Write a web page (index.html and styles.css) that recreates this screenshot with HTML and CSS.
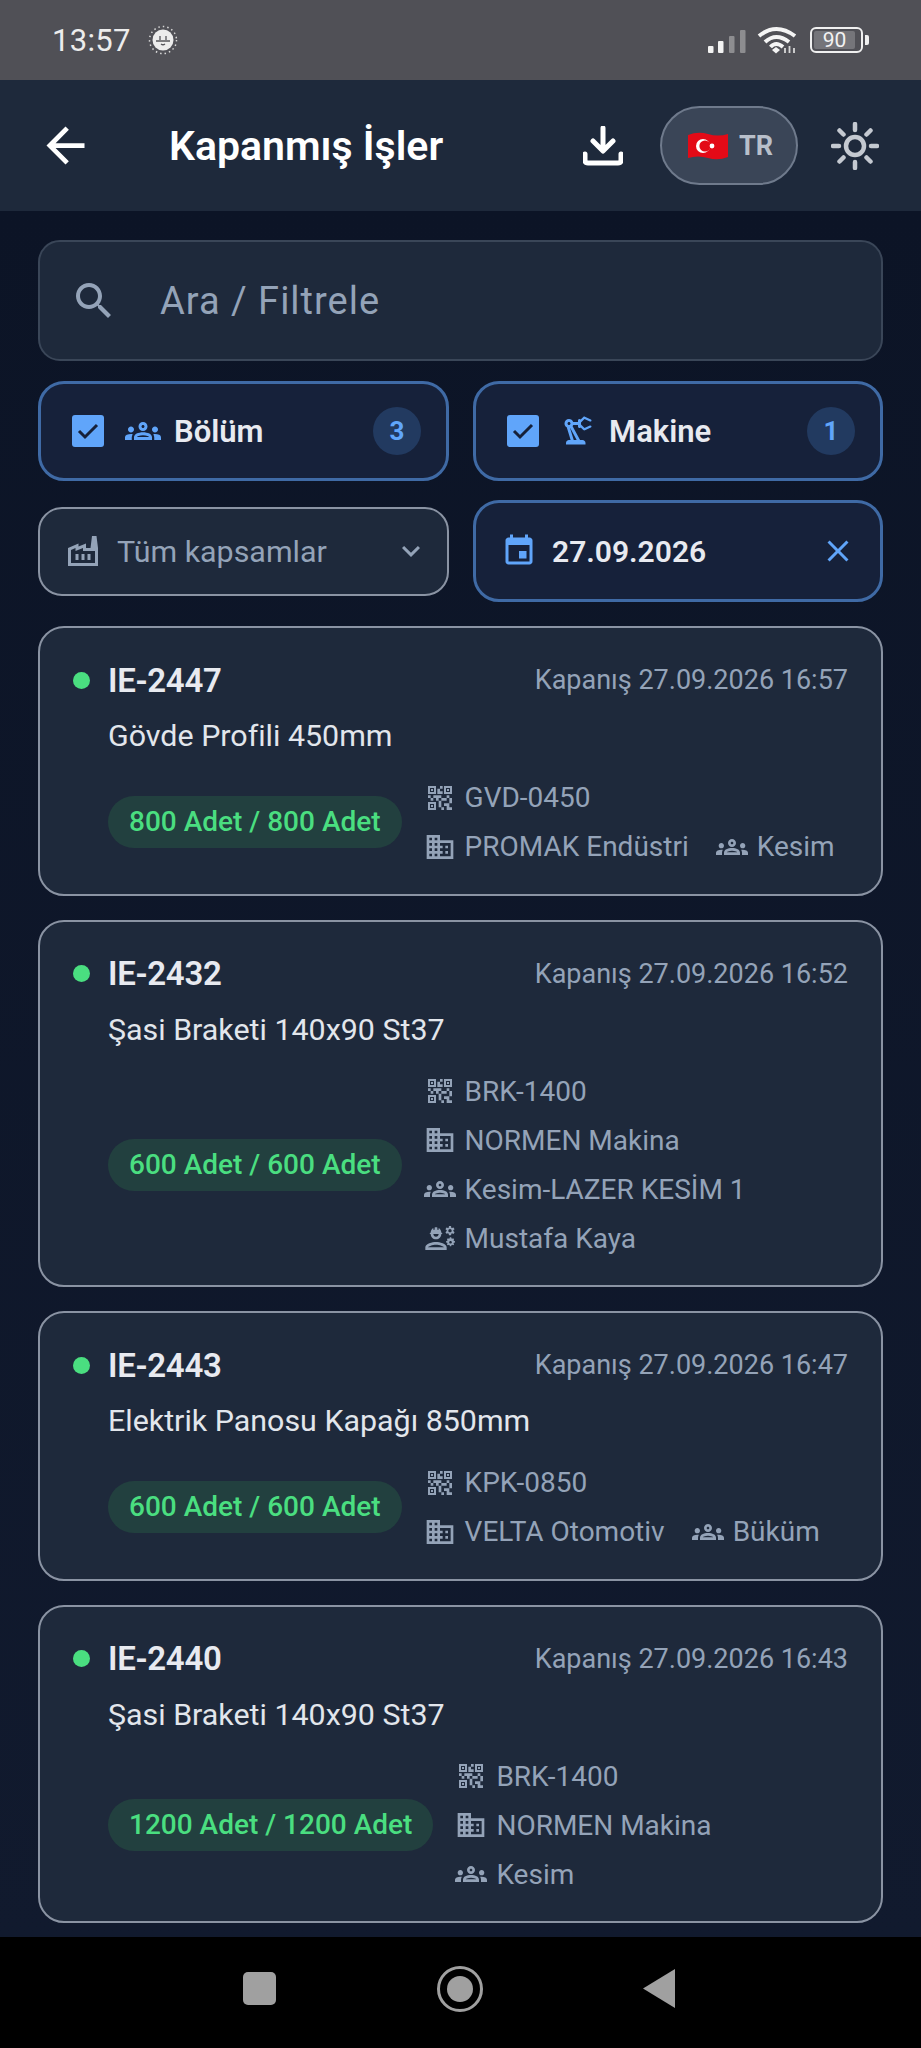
FILE: index.html
```html
<!DOCTYPE html>
<html lang="tr">
<head>
    <meta charset="UTF-8">
    <meta name="viewport" content="width=device-width, initial-scale=1.0">
    <title>Kapanmış İşler</title>
    <link rel="stylesheet" href="styles.css">
</head>
<body>
    <svg class="sprite" xmlns="http://www.w3.org/2000/svg">
        <symbol id="i-back" viewBox="0 0 24 24"><path d="M20 11H7.83l5.59-5.59L12 4l-8 8 8 8 1.41-1.41L7.83 13H20v-2z"/></symbol>
        <symbol id="i-search" viewBox="0 0 24 24"><path d="M15.5 14h-.79l-.28-.27C15.41 12.59 16 11.11 16 9.5 16 5.91 13.09 3 9.5 3S3 5.91 3 9.5 5.91 16 9.5 16c1.61 0 3.09-.59 4.23-1.57l.27.28v.79l5 4.99L20.49 19l-4.99-5zm-6 0C7.01 14 5 11.99 5 9.5S7.01 5 9.5 5 14 7.01 14 9.5 11.99 14 9.5 14z"/></symbol>
        <symbol id="i-groups" viewBox="0 0 24 24"><path d="M4 13c1.1 0 2-.9 2-2 0-1.1-.9-2-2-2s-2 .9-2 2c0 1.1.9 2 2 2zm1.13 1.1C4.76 14.04 4.39 14 4 14c-.99 0-1.93.21-2.78.58C.48 14.9 0 15.62 0 16.43V18h4.5v-1.61c0-.83.23-1.61.63-2.29zM20 13c1.1 0 2-.9 2-2 0-1.1-.9-2-2-2s-2 .9-2 2c0 1.1.9 2 2 2zm4 3.43c0-.81-.48-1.53-1.22-1.85C21.93 14.21 20.99 14 20 14c-.39 0-.76.04-1.13.1.4.68.63 1.46.63 2.29V18H24v-1.57zm-7.76-2.78c-1.17-.52-2.61-.9-4.24-.9-1.63 0-3.07.39-4.24.9C6.68 14.13 6 15.21 6 16.39V18h12v-1.61c0-1.18-.68-2.26-1.76-2.74zM8.07 16c.09-.23.13-.39.91-.69.97-.38 1.99-.56 3.02-.56s2.05.18 3.02.56c.77.3.81.46.91.69H8.07zM12 8c.55 0 1 .45 1 1s-.45 1-1 1-1-.45-1-1 .45-1 1-1m0-2c-1.66 0-3 1.34-3 3s1.34 3 3 3 3-1.34 3-3-1.34-3-3-3z"/></symbol>
        <symbol id="i-robot" viewBox="0 0 24 24"><path d="M19.93 8.35l-3.6 1.68L14 7.7V6.3l2.33-2.33 3.6 1.68c.38.18.82.01 1-.36.18-.38.01-.82-.36-1l-3.92-1.83c-.38-.18-.83-.1-1.13.2L13.78 4.4C13.6 4.16 13.32 4 13 4c-.55 0-1 .45-1 1v1H8.82C8.4 4.84 7.3 4 6 4 4.34 4 3 5.34 3 7c0 1.1.6 2.05 1.48 2.58L7.08 18H6c-1.1 0-2 .9-2 2v1h13v-1c0-1.1-.9-2-2-2h-1.62L8.41 8.77c.17-.24.31-.49.41-.77H12v1c0 .55.45 1 1 1 .32 0 .6-.16.78-.4l1.74 1.74c.3.3.75.38 1.13.2l3.92-1.83c.38-.18.54-.62.36-1-.18-.37-.62-.54-1-.36zM6 8c-.55 0-1-.45-1-1s.45-1 1-1 1 .45 1 1-.45 1-1 1zm5.11 10H9.17l-2.46-8h.1l4.3 8z"/></symbol>
        <symbol id="i-factory" viewBox="0 0 24 24"><path d="M22 22H2V10l7-3v2l5-2v3h3l1-8h3l1 8v12zM12 9.95l-5 2V10l-3 1.32V20h16v-8h-8V9.95zM11 18h2v-4h-2v4zm-4 0h2v-4H7v4zm10-4h-2v4h2v-4z"/></symbol>
        <symbol id="i-chevron" viewBox="0 0 24 24"><path d="M16.59 8.59L12 13.17 7.41 8.59 6 10l6 6 6-6z"/></symbol>
        <symbol id="i-event" viewBox="0 0 24 24"><path d="M17 12h-5v5h5v-5zM16 1v2H8V1H6v2H5c-1.11 0-1.99.9-1.99 2L3 19c0 1.1.89 2 2 2h14c1.1 0 2-.9 2-2V5c0-1.1-.9-2-2-2h-1V1h-2zm3 18H5V8h14v11z"/></symbol>
        <symbol id="i-close" viewBox="0 0 24 24"><path d="M19 6.41L17.59 5 12 10.59 6.41 5 5 6.41 10.59 12 5 17.59 6.41 19 12 13.41 17.59 19 19 17.59 13.41 12z"/></symbol>
        <symbol id="i-qr" viewBox="0 0 24 24"><path d="M15 21h-2v-2h2v2zm-2-7h-2v5h2v-5zm8-2h-2v4h2v-4zm-2-2h-2v2h2v-2zM7 12H5v2h2v-2zm-2-2H3v2h2v-2zm7-5h2V3h-2v2zM4.5 4.5v3h3v-3h-3zM9 9H3V3h6v6zm-4.5 7.5v3h3v-3h-3zM9 21H3v-6h6v6zm7.500-16.500v3h3v-3h-3zM21 9h-6V3h6v6zm-2 10v-3h-4v2h2v3h4v-2h-2zm-2-7h-4v2h4v-2zm-4-2H7v2h2v2h2v-2h2v-2zm1-1V7h-2V5h-2v4h4zM6.75 5.25h-1.5v1.5h1.5v-1.5zm0 12h-1.5v1.5h1.5v-1.5zm12-12h-1.5v1.5h1.5v-1.5z"/></symbol>
        <symbol id="i-business" viewBox="0 0 24 24"><path d="M12 7V3H2v18h20V7H12zM6 19H4v-2h2v2zm0-4H4v-2h2v2zm0-4H4V9h2v2zm0-4H4V5h2v2zm4 12H8v-2h2v2zm0-4H8v-2h2v2zm0-4H8V9h2v2zm0-4H8V5h2v2zm10 12h-8v-2h2v-2h-2v-2h2v-2h-2V9h8v10zm-2-8h-2v2h2v-2zm0 4h-2v2h2v-2z"/></symbol>
        <symbol id="i-engineer" viewBox="0 0 24 24"><path d="M9 15c-2.67 0-8 1.34-8 4v2h16v-2c0-2.66-5.33-4-8-4zm-6 4c.22-.72 3.31-2 6-2 2.7 0 5.8 1.29 6 2H3zM4.74 9H5c0 2.21 1.79 4 4 4s4-1.79 4-4h.26c.27 0 .49-.22.49-.49v-.02c0-.27-.22-.49-.49-.49H13c0-1.48-.81-2.75-2-3.45v.95c0 .28-.22.5-.5.5s-.5-.22-.5-.5V4.14C9.68 4.06 9.35 4 9 4s-.68.06-1 .14V5.500c0 .28-.22.5-.5.5S7 5.78 7 5.500v-.95C5.81 5.25 5 6.52 5 8h-.26c-.27 0-.49.22-.49.49v.03c0 .26.22.48.49.48zM11 9c0 1.1-.9 2-2 2s-2-.9-2-2h4z"/><path d="M21.98 6.23l.93-.83-.75-1.3-1.19.39c-.14-.11-.3-.2-.47-.27L20.25 3h-1.5l-.25 1.22c-.17.07-.33.16-.48.27l-1.18-.39-.75 1.3.93.83c-.02.17-.02.35 0 .52l-.93.85.75 1.3 1.2-.38c.13.1.28.18.43.25l.3 1.23h1.5l.27-1.22c.16-.07.3-.15.44-.25l1.19.38.75-1.3-.93-.85c.02-.18.01-.35 0-.52zM19.5 7.75c-.69 0-1.25-.56-1.25-1.25s.56-1.25 1.25-1.25 1.25.56 1.25 1.25-.56 1.25-1.25 1.25z"/><path d="M19.4 11.5l-.25.9c-.14.04-.28.09-.4.17l-.83-.4-.7.7.4.83c-.08.12-.13.26-.17.4l-.9.25v1l.9.25c.04.14.09.28.17.4l-.4.83.7.7.83-.4c.12.08.26.13.4.17l.25.9h1l.25-.9c.14-.04.28-.09.4-.17l.83.4.7-.7-.4-.83c.08-.12.13-.26.17-.4l.9-.25v-1l-.9-.25c-.04-.14-.09-.28-.17-.4l.4-.83-.7-.7-.83.4c-.12-.08-.26-.13-.4-.17l-.25-.9h-1zm.5 2.7c.55 0 1 .45 1 1s-.45 1-1 1-1-.45-1-1 .45-1 1-1z"/></symbol>
    </svg>

    <div class="status-bar">
        <span class="status-time">13:57</span>
        <svg class="status-notif" viewBox="0 0 30 30">
            <circle cx="15" cy="15" r="13.5" class="notif-ring"/>
            <circle cx="15" cy="15" r="10.5" class="notif-disc"/>
            <path d="M8 16h14M12 15v-4M18 15v-4M13 19q2 1.5 4 0" class="notif-mark"/>
        </svg>
        <div class="status-right">
            <svg class="status-signal" viewBox="0 0 38 24">
                <rect x="0" y="17" width="5.5" height="7" rx="1" class="bar-on"/>
                <rect x="10" y="12" width="5.5" height="12" rx="1" class="bar-on"/>
                <rect x="21" y="7" width="5.5" height="17" rx="1" class="bar-off"/>
                <rect x="32" y="1" width="5.5" height="23" rx="1" class="bar-off"/>
            </svg>
            <svg class="status-wifi" viewBox="0 0 40 28">
                <path d="M2 10Q19-4 38 10M8 16Q19 6 32 16M13.5 21Q19 15 26 21" class="wifi-arc"/>
                <path d="M15 24l4-3 4 3-4 3.5z" class="wifi-dot"/>
                <path d="M28 22v5M32.5 20v7M37 22v5" class="wifi-arrows"/>
            </svg>
            <div class="battery">
                <div class="battery-body"><div class="battery-fill">90</div></div>
                <div class="battery-nub"></div>
            </div>
        </div>
    </div>

    <header class="app-bar">
        <svg class="icon back-icon"><use href="#i-back"/></svg>
        <h1 class="app-title">Kapanmış İşler</h1>
        <svg class="download-icon" viewBox="0 0 40 40">
            <path d="M20 2v22M10 15l10 10 10-10"/>
            <path d="M2 28v6q0 3 3 3h30q3 0 3-3v-6"/>
        </svg>
        <div class="lang-pill">
            <svg class="flag" viewBox="0 0 40 28">
                <path d="M0 3Q10-1 20 2T40 2V25Q30 29 20 26T0 26z" fill="#e30a17"/>
                <circle cx="15" cy="14" r="7" fill="#fff"/>
                <circle cx="17" cy="14" r="5.6" fill="#e30a17"/>
                <circle cx="24" cy="14" r="2.4" fill="#fff"/>
            </svg>
            <span class="lang-code">TR</span>
        </div>
        <svg class="sun-icon" viewBox="0 0 48 48">
            <circle cx="24" cy="24" r="9"/>
            <path d="M24 2v6M24 40v6M2 24h6M40 24h6M8.5 8.5l4 4M35.5 35.5l4 4M8.500 39.5l4-4M35.5 12.5l4-4"/>
        </svg>
    </header>

    <main class="content">
        <div class="search-box">
            <svg class="icon search-icon"><use href="#i-search"/></svg>
            <span class="search-text">Ara / Filtrele</span>
        </div>

        <div class="filter-grid">
            <div class="chip">
                <span class="checkbox"><svg viewBox="0 0 32 32"><path d="M7 16l6 6 12-12"/></svg></span>
                <svg class="icon chip-icon"><use href="#i-groups"/></svg>
                <span class="chip-label">Bölüm</span>
                <span class="chip-count">3</span>
            </div>
            <div class="chip">
                <span class="checkbox"><svg viewBox="0 0 32 32"><path d="M7 16l6 6 12-12"/></svg></span>
                <svg class="icon chip-icon"><use href="#i-robot"/></svg>
                <span class="chip-label">Makine</span>
                <span class="chip-count">1</span>
            </div>
            <div class="select-box">
                <svg class="icon select-icon"><use href="#i-factory"/></svg>
                <span class="select-text">Tüm kapsamlar</span>
                <svg class="icon chevron-icon"><use href="#i-chevron"/></svg>
            </div>
            <div class="date-box">
                <svg class="icon date-icon"><use href="#i-event"/></svg>
                <span class="date-text">27.09.2026</span>
                <svg class="icon close-icon"><use href="#i-close"/></svg>
            </div>
        </div>

        <div class="job-list">
            <article class="job-card">
                <div class="job-head">
                    <span class="job-dot"></span>
                    <span class="job-id">IE-2447</span>
                    <span class="job-closed">Kapanış 27.09.2026 16:57</span>
                </div>
                <div class="job-name">Gövde Profili 450mm</div>
                <div class="job-body">
                    <span class="job-qty">800 Adet / 800 Adet</span>
                    <div class="job-meta">
                        <span class="meta-item"><svg class="icon"><use href="#i-qr"/></svg>GVD-0450</span>
                        <span class="meta-item"><svg class="icon"><use href="#i-business"/></svg>PROMAK Endüstri</span>
                        <span class="meta-item"><svg class="icon"><use href="#i-groups"/></svg>Kesim</span>
                    </div>
                </div>
            </article>

            <article class="job-card">
                <div class="job-head">
                    <span class="job-dot"></span>
                    <span class="job-id">IE-2432</span>
                    <span class="job-closed">Kapanış 27.09.2026 16:52</span>
                </div>
                <div class="job-name">Şasi Braketi 140x90 St37</div>
                <div class="job-body">
                    <span class="job-qty">600 Adet / 600 Adet</span>
                    <div class="job-meta">
                        <span class="meta-item"><svg class="icon"><use href="#i-qr"/></svg>BRK-1400</span>
                        <span class="meta-item"><svg class="icon"><use href="#i-business"/></svg>NORMEN Makina</span>
                        <span class="meta-item"><svg class="icon"><use href="#i-groups"/></svg>Kesim-LAZER KESİM 1</span>
                        <span class="meta-item"><svg class="icon"><use href="#i-engineer"/></svg>Mustafa Kaya</span>
                    </div>
                </div>
            </article>

            <article class="job-card">
                <div class="job-head">
                    <span class="job-dot"></span>
                    <span class="job-id">IE-2443</span>
                    <span class="job-closed">Kapanış 27.09.2026 16:47</span>
                </div>
                <div class="job-name">Elektrik Panosu Kapağı 850mm</div>
                <div class="job-body">
                    <span class="job-qty">600 Adet / 600 Adet</span>
                    <div class="job-meta">
                        <span class="meta-item"><svg class="icon"><use href="#i-qr"/></svg>KPK-0850</span>
                        <span class="meta-item"><svg class="icon"><use href="#i-business"/></svg>VELTA Otomotiv</span>
                        <span class="meta-item"><svg class="icon"><use href="#i-groups"/></svg>Büküm</span>
                    </div>
                </div>
            </article>

            <article class="job-card">
                <div class="job-head">
                    <span class="job-dot"></span>
                    <span class="job-id">IE-2440</span>
                    <span class="job-closed">Kapanış 27.09.2026 16:43</span>
                </div>
                <div class="job-name">Şasi Braketi 140x90 St37</div>
                <div class="job-body">
                    <span class="job-qty">1200 Adet / 1200 Adet</span>
                    <div class="job-meta">
                        <span class="meta-item"><svg class="icon"><use href="#i-qr"/></svg>BRK-1400</span>
                        <span class="meta-item"><svg class="icon"><use href="#i-business"/></svg>NORMEN Makina</span>
                        <span class="meta-item"><svg class="icon"><use href="#i-groups"/></svg>Kesim</span>
                    </div>
                </div>
            </article>
        </div>
    </main>

    <nav class="nav-bar">
        <span class="nav-square"></span>
        <span class="nav-circle"><span class="nav-circle-dot"></span></span>
        <span class="nav-back"></span>
    </nav>
</body>
</html>
```

FILE: styles.css
```css
* {
    box-sizing: border-box;
}
body {
    margin: 0;
    display: flex;
    flex-direction: column;
    height: 100vh;
    overflow: hidden;
    font-family: Roboto, "Liberation Sans", sans-serif;
    background-color: #0f172a;
}
.sprite {
    display: none;
}
.icon {
    width: 32px;
    height: 32px;
    fill: currentColor;
    flex: none;
}

/* status bar */
.status-bar {
    height: 80px;
    flex: none;
    display: flex;
    align-items: center;
    padding: 0 52px;
    background-color: #505056;
    color: #ececec;
}
.status-time {
    font-size: 31px;
    letter-spacing: 0.3px;
}
.status-notif {
    width: 30px;
    height: 30px;
    margin-left: 17px;
}
.notif-ring {
    fill: none;
    stroke: #d8d8d8;
    stroke-width: 1.5;
    stroke-dasharray: 1.5 3;
}
.notif-disc {
    fill: #ececec;
}
.notif-mark {
    fill: none;
    stroke: #55555a;
    stroke-width: 1.3;
}
.status-right {
    margin-left: auto;
    display: flex;
    align-items: center;
}
.status-signal {
    width: 38px;
    height: 24px;
    margin-top: 1px;
}
.bar-on {
    fill: #f2f2f2;
}
.bar-off {
    fill: #8d8d90;
}
.status-wifi {
    width: 40px;
    height: 28px;
    margin-left: 11px;
}
.wifi-arc {
    fill: none;
    stroke: #f4f4f4;
    stroke-width: 4;
}
.wifi-dot {
    fill: #f4f4f4;
}
.wifi-arrows {
    fill: none;
    stroke: #d8d8d8;
    stroke-width: 1.8;
}
.battery {
    display: flex;
    align-items: center;
    margin-left: 13px;
}
.battery-body {
    width: 53px;
    height: 26px;
    padding: 2px;
    border: 2px solid #f0f0f0;
    border-radius: 6px;
}
.battery-fill {
    width: 41px;
    height: 100%;
    border-radius: 2px;
    background-color: #75757a;
    color: #f2f2f2;
    font-size: 21px;
    line-height: 18px;
    text-align: center;
}
.battery-nub {
    width: 4px;
    height: 10px;
    margin-left: 2px;
    border-radius: 0 2px 2px 0;
    background-color: #f0f0f0;
}

/* app bar */
.app-bar {
    height: 131px;
    flex: none;
    display: flex;
    align-items: center;
    padding: 0 42px 0 37px;
    background-color: #1e293b;
}
.back-icon {
    width: 57px;
    height: 57px;
    color: #ffffff;
}
.app-title {
    margin: 0 0 0 75px;
    font-size: 41px;
    font-weight: 600;
    color: #ffffff;
}
.download-icon {
    width: 40px;
    height: 40px;
    margin-left: auto;
    fill: none;
    stroke: #ffffff;
    stroke-width: 5;
    stroke-linecap: round;
    stroke-linejoin: round;
}
.lang-pill {
    width: 138px;
    height: 79px;
    margin-left: 37px;
    display: flex;
    align-items: center;
    padding-left: 26px;
    gap: 11px;
    border: 2px solid #6f7a8c;
    border-radius: 40px;
    background-color: #3a4557;
}
.flag {
    width: 40px;
    height: 28px;
}
.lang-code {
    font-size: 27px;
    font-weight: 700;
    color: #b8bfca;
}
.sun-icon {
    width: 48px;
    height: 48px;
    margin-left: 33px;
    fill: none;
    stroke: #c4c9d1;
    stroke-width: 4.5;
    stroke-linecap: round;
}

/* search and filters */
.content {
    flex: 1;
    overflow: hidden;
    padding: 29px 38px 0;
    background: linear-gradient(#0c1426, #111a2e);
}
.search-box {
    height: 121px;
    display: flex;
    align-items: center;
    padding-left: 30px;
    border: 2px solid #3a4658;
    border-radius: 22px;
    background-color: #1e293b;
}
.search-icon {
    width: 48px;
    height: 48px;
    color: #94a3b8;
}
.search-text {
    margin-left: 42px;
    font-size: 38px;
    letter-spacing: 1px;
    color: #94a3b8;
}
.filter-grid {
    display: grid;
    grid-template-columns: 411px 410px;
    column-gap: 24px;
    row-gap: 19px;
    align-items: center;
    margin-top: 20px;
}
.chip, .date-box {
    display: flex;
    align-items: center;
    border: 3px solid #3f6aa5;
    border-radius: 26px;
    background-color: #16213a;
}
.chip {
    height: 100px;
    padding: 0 25px 0 31px;
}
.checkbox {
    width: 32px;
    height: 32px;
    flex: none;
    border-radius: 3px;
    background-color: #60a5fa;
}
.checkbox svg {
    display: block;
    fill: none;
    stroke: #16213a;
    stroke-width: 3;
}
.chip-icon {
    width: 36px;
    height: 36px;
    margin-left: 21px;
    color: #60a5fa;
}
.chip-label {
    margin-left: 13px;
    font-size: 31px;
    font-weight: 600;
    color: #e8eaf0;
}
.chip-count {
    width: 48px;
    height: 48px;
    margin-left: auto;
    border-radius: 50%;
    background-color: #223a60;
    color: #60a5fa;
    font-size: 26px;
    font-weight: 700;
    line-height: 48px;
    text-align: center;
}
.select-box {
    height: 89px;
    display: flex;
    align-items: center;
    padding: 0 18px 0 25px;
    border: 2px solid #8a93a3;
    border-radius: 24px;
    background-color: #1e293b;
}
.select-icon {
    width: 36px;
    height: 36px;
    color: #94a3b8;
}
.select-text {
    margin-left: 16px;
    font-size: 30.4px;
    color: #94a3b8;
}
.chevron-icon {
    width: 36px;
    height: 36px;
    margin-left: auto;
    color: #94a3b8;
}
.date-box {
    height: 102px;
    padding: 0 24px 0 25px;
}
.date-icon {
    width: 36px;
    height: 36px;
    color: #60a5fa;
}
.date-text {
    margin-left: 15px;
    font-size: 30px;
    font-weight: 600;
    color: #e8eaf0;
}
.close-icon {
    width: 36px;
    height: 36px;
    margin-left: auto;
    color: #60a5fa;
}

/* job cards */
.job-list {
    display: flex;
    flex-direction: column;
    gap: 24px;
    margin-top: 24px;
}
.job-card {
    padding: 27px 33px 28.5px;
    border: 2px solid #8a93a3;
    border-radius: 26px;
    background-color: #1e293b;
}
.job-head {
    display: flex;
    align-items: center;
    height: 50px;
}
.job-dot {
    width: 17px;
    height: 17px;
    border-radius: 50%;
    background-color: #4ade80;
}
.job-id {
    margin-left: 18px;
    font-size: 33px;
    font-weight: 600;
    letter-spacing: -0.3px;
    color: #e8eaf0;
}
.job-closed {
    margin-left: auto;
    font-size: 27px;
    color: #94a3b8;
}
.job-name {
    height: 40px;
    margin: 11px 0 23px 35px;
    font-size: 30.4px;
    line-height: 40px;
    color: #e2e6ec;
}
.job-body {
    display: flex;
    align-items: center;
    gap: 22px;
    margin-left: 35px;
}
.job-qty {
    flex: none;
    height: 52px;
    padding: 0 21px;
    border-radius: 26px;
    background-color: #22403f;
    color: #4ade80;
    font-size: 28px;
    font-weight: 500;
    line-height: 52px;
}
.job-meta {
    flex: 1;
    display: flex;
    flex-wrap: wrap;
    gap: 12px 27px;
}
.meta-item {
    display: flex;
    align-items: center;
    gap: 9px;
    height: 37px;
    font-size: 28px;
    color: #94a3b8;
}

/* android nav bar */
.nav-bar {
    height: 111px;
    flex: none;
    display: flex;
    align-items: center;
    justify-content: space-between;
    padding: 0 246px 8px 243px;
    background-color: #000000;
}
.nav-square {
    width: 33px;
    height: 33px;
    border-radius: 5px;
    background-color: #a0a0a0;
}
.nav-circle {
    width: 46px;
    height: 46px;
    display: flex;
    align-items: center;
    justify-content: center;
    border: 3px solid #a0a0a0;
    border-radius: 50%;
}
.nav-circle-dot {
    width: 26px;
    height: 26px;
    border-radius: 50%;
    background-color: #a0a0a0;
}
.nav-back {
    width: 32px;
    height: 39px;
    background-color: #a0a0a0;
    clip-path: polygon(100% 0, 100% 100%, 0 50%);
}
```
